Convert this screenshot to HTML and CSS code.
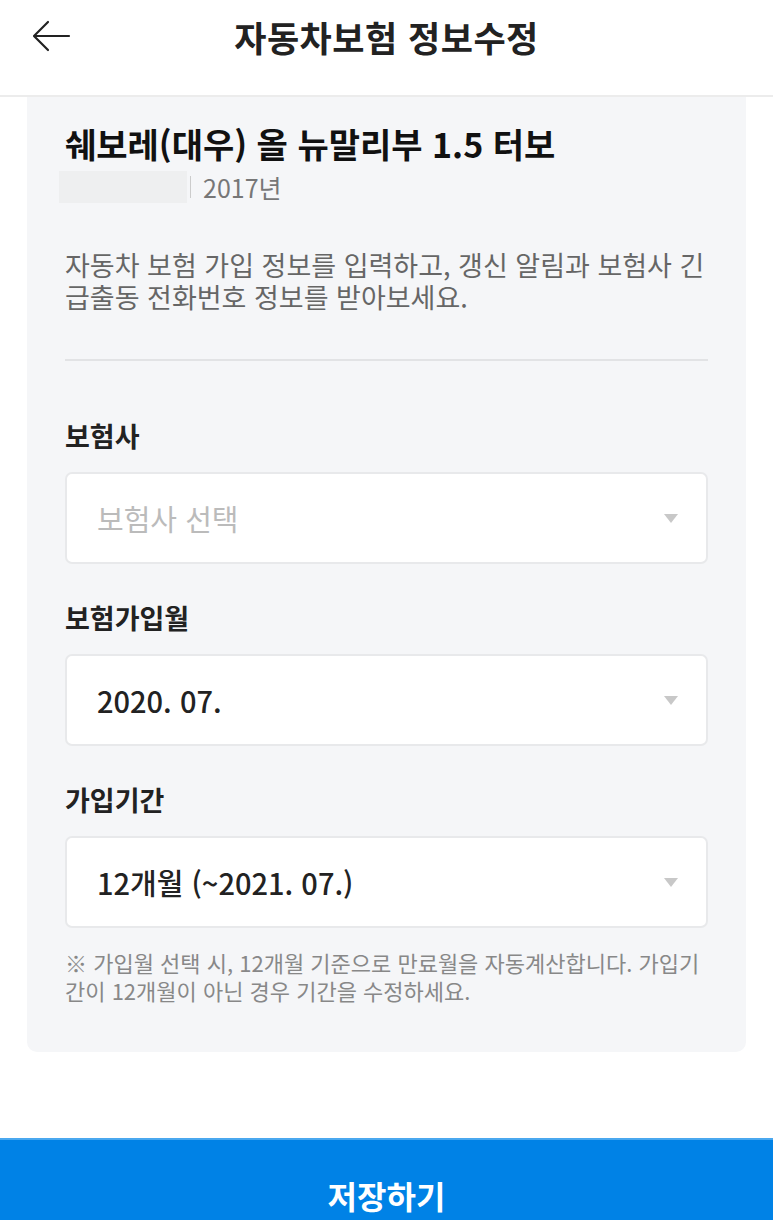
FILE: index.html
```html
<!DOCTYPE html>
<html lang="ko">
<head>
<meta charset="utf-8">
<title>자동차보험 정보수정</title>
<link rel="stylesheet" href="styles.css">
</head>
<body>
<header class="topbar">
  <button class="back" aria-label="뒤로">
    <svg width="40" height="32" viewBox="0 0 40 32" fill="none" stroke="#222" stroke-width="2.2" stroke-linecap="round" stroke-linejoin="round">
      <path d="M37 16H3M16 2L2 16l14 14"/>
    </svg>
  </button>
  <h1 class="title">자동차보험 정보수정</h1>
</header>
<main class="card">
  <h2 class="car-name">쉐보레(대우) 올 뉴말리부 1.5 터보</h2>
  <div class="car-meta">
    <span class="plate"></span>
    <span class="sep"></span>
    <span class="year">2017년</span>
  </div>
  <p class="desc">자동차 보험 가입 정보를 입력하고, 갱신 알림과 보험사 긴급출동 전화번호 정보를 받아보세요.</p>
  <hr class="divider">
  <div class="field">
    <div class="label">보험사</div>
    <div class="select placeholder"><span>보험사 선택</span><i class="caret"></i></div>
  </div>
  <div class="field">
    <div class="label">보험가입월</div>
    <div class="select"><span>2020. 07.</span><i class="caret"></i></div>
  </div>
  <div class="field">
    <div class="label">가입기간</div>
    <div class="select"><span>12개월 (~2021. 07.)</span><i class="caret"></i></div>
  </div>
  <p class="note">※ 가입월 선택 시, 12개월 기준으로 만료월을 자동계산합니다. 가입기간이 12개월이 아닌 경우 기간을 수정하세요.</p>
</main>
<footer class="bottom">
  <button class="save">저장하기</button>
</footer>
</body>
</html>
```
FILE: styles.css
```css
* { box-sizing: border-box; }
html, body { margin: 0; padding: 0; }
body {
  width: 773px;
  height: 1220px;
  overflow: hidden;
  background: #fff;
  font-family: "Noto Sans CJK KR", "Noto Sans", sans-serif;
  color: #222;
}
.topbar {
  height: 97px;
  border-bottom: 2px solid #ececec;
  display: flex;
  align-items: center;
  justify-content: center;
  position: relative;
  padding-bottom: 22px;
}
.back {
  position: absolute;
  left: 32px;
  top: 20px;
  background: none;
  border: 0;
  padding: 0;
  width: 40px;
  height: 34px;
}
.title {
  margin: 0;
  font-size: 35px;
  font-weight: 700;
  letter-spacing: 0.5px;
  line-height: 44px;
  color: #222;
}
.card {
  margin: 0 27px;
  background: #f5f6f8;
  border-radius: 0 0 10px 10px;
  padding: 20px 38px 36px;
  height: 955px;
}
.car-name {
  margin: 0;
  font-size: 34px;
  font-weight: 700;
  line-height: 54px;
  color: #111;
}
.car-meta {
  display: flex;
  align-items: center;
  height: 32px;
}
.plate {
  width: 128px;
  height: 32px;
  background: #eeeff0;
  margin-left: -6px;
}
.sep {
  width: 1px;
  height: 22px;
  background: #ccc;
  margin: 0 12px 0 3px;
}
.year {
  font-size: 25px;
  color: #777;
  line-height: 32px;
}
.desc {
  margin: 46px 0 0;
  font-size: 27px;
  line-height: 32px;
  color: #666;
}
.divider {
  border: 0;
  height: 2px;
  background: #e2e3e5;
  margin: 46px 0 0;
}
.field { margin-top: 57px; }
.field + .field { margin-top: 36px; }
.label {
  font-size: 27px;
  font-weight: 700;
  line-height: 36px;
  color: #222;
}
.select {
  margin-top: 18px;
  height: 92px;
  background: #fff;
  border: 2px solid #e8e9eb;
  border-radius: 7px;
  display: flex;
  align-items: center;
  justify-content: space-between;
  padding: 0 28px 0 30px;
  font-size: 29px;
  font-weight: 500;
  color: #222;
}
.select.placeholder {
  color: #bbb;
  font-weight: 400;
}
.caret {
  width: 0;
  height: 0;
  border-left: 7px solid transparent;
  border-right: 7px solid transparent;
  border-top: 9px solid #c8c8c8;
}
.note {
  margin: 20px 0 0;
  font-size: 22px;
  line-height: 28px;
  color: #888;
}
.bottom {
  margin-top: 86px;
}
.save {
  display: block;
  width: 100%;
  height: 112px;
  border: 0;
  background: #0082e6;
  color: #fff;
  font-family: "Noto Sans CJK KR", sans-serif;
  font-size: 32px;
  font-weight: 700;
  padding: 0;
  border-top: 2px solid #4aa8ef;
}
```
